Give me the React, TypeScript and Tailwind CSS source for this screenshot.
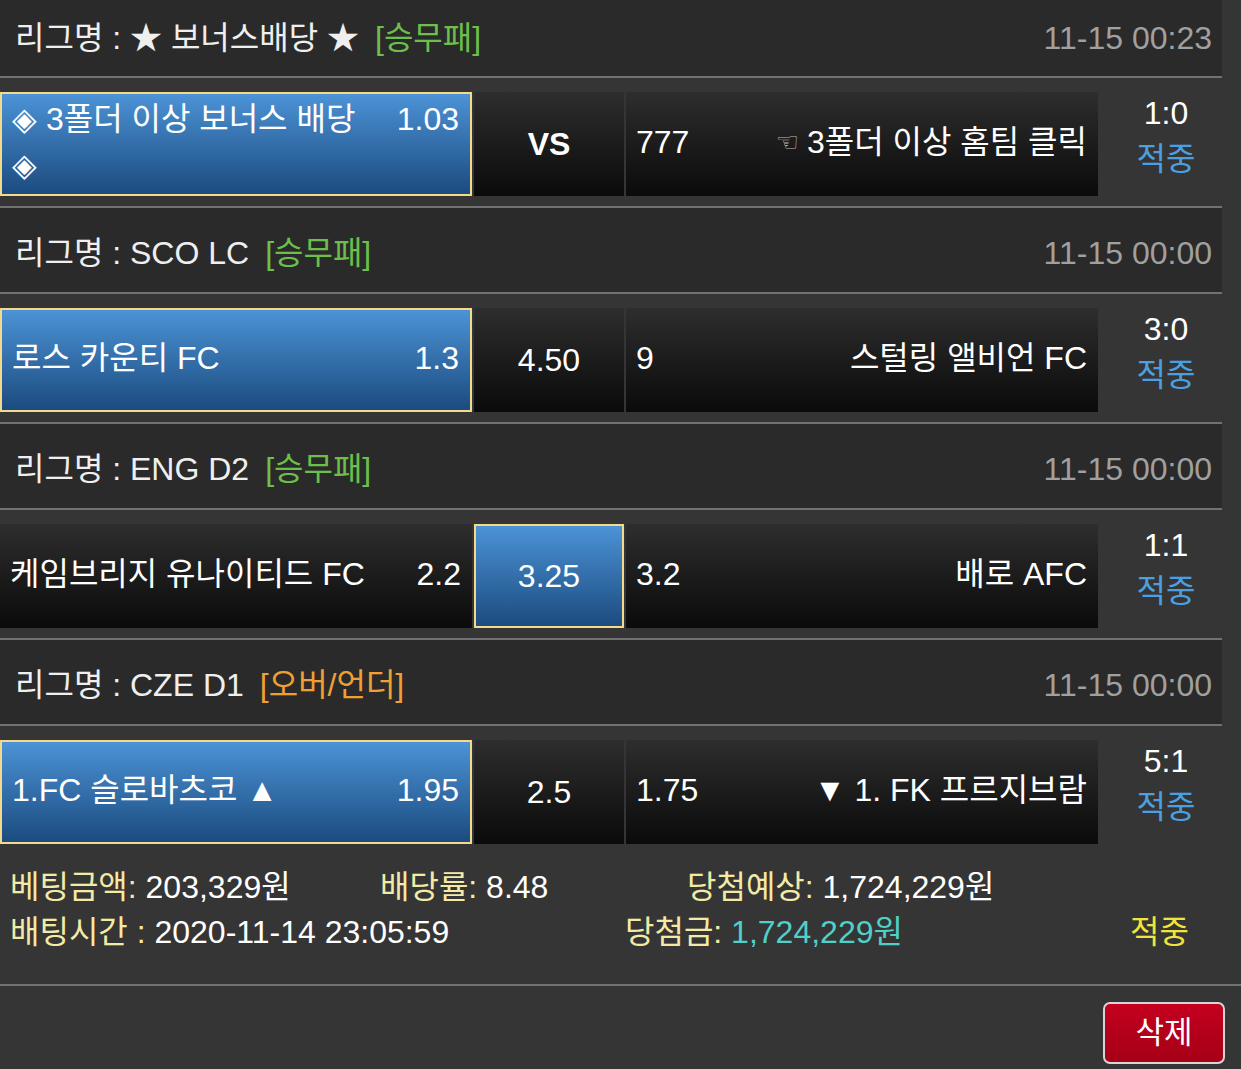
import React from 'react'

type Pick = 'home' | 'draw' | 'away'

type Bet = {
  league: string
  kind: string
  kindColor: string
  time: string
  home: string
  homeOdds: string
  draw: string
  drawBold?: boolean
  away: string
  awayOdds: string
  awayIcon?: boolean
  score: string
  pick: Pick
}

const bets: Bet[] = [
  {
    league: '★ 보너스배당 ★',
    kind: '[승무패]',
    kindColor: 'text-[#6cc04a]',
    time: '11-15 00:23',
    home: '◈ 3폴더 이상 보너스 배당\n◈',
    homeOdds: '1.03',
    draw: 'VS',
    drawBold: true,
    away: '3폴더 이상 홈팀 클릭',
    awayOdds: '777',
    awayIcon: true,
    score: '1:0',
    pick: 'home',
  },
  {
    league: 'SCO LC',
    kind: '[승무패]',
    kindColor: 'text-[#6cc04a]',
    time: '11-15 00:00',
    home: '로스 카운티 FC',
    homeOdds: '1.3',
    draw: '4.50',
    away: '스털링 앨비언 FC',
    awayOdds: '9',
    score: '3:0',
    pick: 'home',
  },
  {
    league: 'ENG D2',
    kind: '[승무패]',
    kindColor: 'text-[#6cc04a]',
    time: '11-15 00:00',
    home: '케임브리지 유나이티드 FC',
    homeOdds: '2.2',
    draw: '3.25',
    away: '배로 AFC',
    awayOdds: '3.2',
    score: '1:1',
    pick: 'draw',
  },
  {
    league: 'CZE D1',
    kind: '[오버/언더]',
    kindColor: 'text-[#f0a032]',
    time: '11-15 00:00',
    home: '1.FC 슬로바츠코 ▲',
    homeOdds: '1.95',
    draw: '2.5',
    away: '▼ 1. FK 프르지브람',
    awayOdds: '1.75',
    score: '5:1',
    pick: 'home',
  },
]

const cellOn =
  'bg-linear-to-b from-[#4c93d6] to-[#1c4c80] border-2 border-[#f2d98c]'
const cellOff = 'bg-linear-to-b from-[#2e2e2e] to-[#0b0b0b]'

function BetBlock({ bet, first, last }: { bet: Bet; first: boolean; last: boolean }) {
  return (
    <div className="w-[1222px]">
      {/* league header */}
      <div
        className={`flex items-center justify-between bg-[#2a2a2a] border-b-2 border-[#727272] pl-[15px] pr-[10px] ${
          first ? 'h-[78px]' : 'h-[86px] pt-[6px]'
        }`}
      >
        <div className="text-[#efefef]">
          리그명 : {bet.league}
          <span className={`ml-4 ${bet.kindColor}`}>{bet.kind}</span>
        </div>
        <div className="text-[#a0a0a0]">{bet.time}</div>
      </div>

      {/* match row */}
      <div
        className={`flex gap-[2px] pt-[14px] pb-[10px] ${
          last ? '' : 'border-b-2 border-[#727272]'
        }`}
      >
        <div
          className={`w-[472px] h-[104px] flex items-center pl-[10px] pr-[11px] pb-[4px] ${
            bet.pick === 'home' ? cellOn : cellOff
          }`}
        >
          <div className="flex w-full items-start justify-between leading-[46px]">
            <span className="whitespace-pre-line">{bet.home}</span>
            <span>{bet.homeOdds}</span>
          </div>
        </div>
        <div
          className={`w-[150px] h-[104px] flex items-center justify-center ${
            bet.pick === 'draw' ? cellOn : cellOff
          } ${bet.drawBold ? 'font-bold' : ''}`}
        >
          {bet.draw}
        </div>
        <div
          className={`w-[472px] h-[104px] flex items-center justify-between pl-[10px] pr-[11px] pb-[4px] ${
            bet.pick === 'away' ? cellOn : cellOff
          }`}
        >
          <span>{bet.awayOdds}</span>
          <span className="flex items-center">
            {bet.awayIcon && (
              <span className="mr-[8px] text-[26px] text-[#b8b8b8] font-['DejaVu_Sans',sans-serif]">
                ☜
              </span>
            )}
            {bet.away}
          </span>
        </div>
        <div className="flex-1 flex flex-col items-center pl-[10px]">
          <div className="leading-[42px]">{bet.score}</div>
          <div className="leading-[42px] mt-[4px] text-[#4ba0e2]">적중</div>
        </div>
      </div>
    </div>
  )
}

export default function App() {
  return (
    <div className="min-h-[1069px] w-[1241px] bg-[#353535] text-white text-[32px] font-['Liberation_Sans','Noto_Sans_CJK_KR',sans-serif] overflow-hidden">
      {bets.map((b, i) => (
        <BetBlock key={i} bet={b} first={i === 0} last={i === bets.length - 1} />
      ))}

      {/* summary */}
      <div className="pt-[11px] pb-[29px] pl-[10px] border-b-2 border-[#727272] leading-[45px]">
        <div className="grid grid-cols-[370px_307px_1fr]">
          <div>
            <span className="text-[#f3eaa6]">베팅금액:</span> 203,329원
          </div>
          <div>
            <span className="text-[#f3eaa6]">배당률:</span> 8.48
          </div>
          <div>
            <span className="text-[#f3eaa6]">당첨예상:</span> 1,724,229원
          </div>
        </div>
        <div className="grid grid-cols-[615px_505px_1fr]">
          <div>
            <span className="text-[#f3eaa6]">배팅시간 :</span> 2020-11-14 23:05:59
          </div>
          <div>
            <span className="text-[#f3eaa6]">당첨금:</span>{' '}
            <span className="text-[#4fd0c8]">1,724,229원</span>
          </div>
          <div className="text-[#f2e43c]">적중</div>
        </div>
      </div>

      <div className="flex justify-end pt-[16px] pr-[16px]">
        <button className="w-[122px] h-[62px] rounded-[7px] border-2 border-[#d6d6d6] bg-linear-to-b from-[#c4001f] to-[#a50017] text-white text-[31px]">
          삭제
        </button>
      </div>
    </div>
  )
}
